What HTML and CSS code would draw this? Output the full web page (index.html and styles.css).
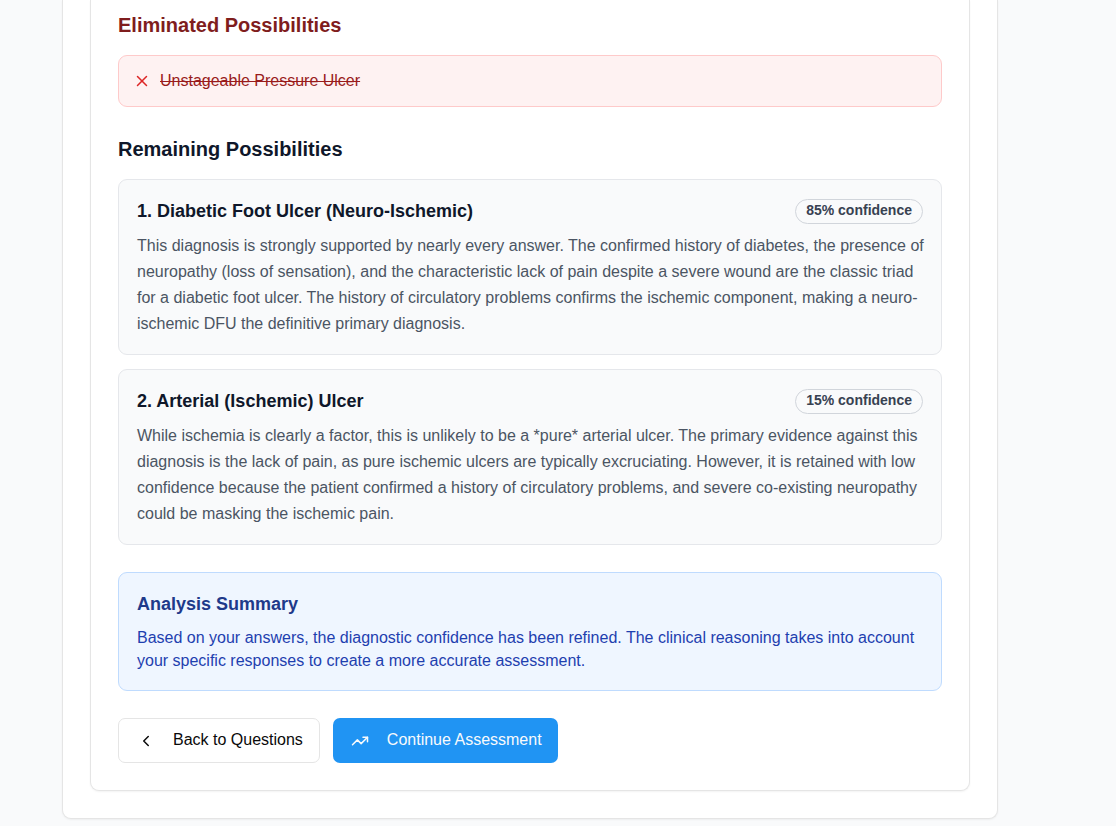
FILE: index.html
```html
<!DOCTYPE html>
<html lang="en">
<head>
<meta charset="utf-8">
<meta name="viewport" content="width=device-width, initial-scale=1">
<title>Diagnostic Assessment</title>
<link rel="stylesheet" href="styles.css">
</head>
<body>
<main class="page">
  <div class="panel">
    <div class="panel results">
      <section class="group">
        <h2 class="heading heading-danger">Eliminated Possibilities</h2>
        <div class="eliminated">
          <svg class="icon" viewBox="0 0 24 24" aria-hidden="true"><path d="M18 6 6 18"/><path d="m6 6 12 12"/></svg>
          <s>Unstageable Pressure Ulcer</s>
        </div>
      </section>

      <section class="group">
        <h2 class="heading">Remaining Possibilities</h2>
        <div class="list">
          <article class="diagnosis">
            <div class="diagnosis-head">
              <h3 class="title">1. Diabetic Foot Ulcer (Neuro-Ischemic)</h3>
              <span class="badge">85% confidence</span>
            </div>
            <p class="reasoning">This diagnosis is strongly supported by nearly every answer. The confirmed history of diabetes, the presence of neuropathy (loss of sensation), and the characteristic lack of pain despite a severe wound are the classic triad for a diabetic foot ulcer. The history of circulatory problems confirms the ischemic component, making a neuro-ischemic DFU the definitive primary diagnosis.</p>
          </article>
          <article class="diagnosis">
            <div class="diagnosis-head">
              <h3 class="title">2. Arterial (Ischemic) Ulcer</h3>
              <span class="badge">15% confidence</span>
            </div>
            <p class="reasoning">While ischemia is clearly a factor, this is unlikely to be a *pure* arterial ulcer. The primary evidence against this diagnosis is the lack of pain, as pure ischemic ulcers are typically excruciating. However, it is retained with low confidence because the patient confirmed a history of circulatory problems, and severe co-existing neuropathy could be masking the ischemic pain.</p>
          </article>
        </div>
      </section>

      <section class="summary">
        <h3 class="title">Analysis Summary</h3>
        <p class="summary-text">Based on your answers, the diagnostic confidence has been refined. The clinical reasoning takes into account your specific responses to create a more accurate assessment.</p>
      </section>

      <div class="actions">
        <button type="button" class="button">
          <svg class="icon" viewBox="0 0 24 24" aria-hidden="true"><path d="m15 18-6-6 6-6"/></svg>
          <span class="button-label">Back to Questions</span>
        </button>
        <button type="button" class="button button-primary">
          <svg class="icon" viewBox="0 0 24 24" aria-hidden="true"><path d="M22 7 13.5 15.5 8.5 10.5 2 17"/><path d="M16 7h6v6"/></svg>
          <span class="button-label">Continue Assessment</span>
        </button>
      </div>
    </div>
  </div>
</main>
</body>
</html>
```
FILE: styles.css
```css
* {
  box-sizing: border-box;
}

body {
  margin: 0;
  background: #f9fafb;
  color: #0f172a;
  font-family: "Liberation Sans", Arial, sans-serif;
  font-size: 16px;
  line-height: 23px;
}

h2,
h3,
p {
  margin: 0;
}

.page {
  padding: 0 118px 7px 62px;
}

.panel {
  padding: 0 27px 27px;
  border: 1px solid #e5e5e5;
  border-top: 0;
  border-radius: 0 0 9px 9px;
  background: #fff;
  box-shadow: 0 1px 2px rgba(0, 0, 0, 0.05);
}

.results {
  display: flex;
  flex-direction: column;
  gap: 27px;
  padding-top: 10px;
}

.group {
  display: flex;
  flex-direction: column;
  gap: 14px;
}

.heading {
  font-size: 20px;
  font-weight: 700;
  line-height: 31px;
}

.heading-danger {
  color: #7f1d1d;
}

.icon {
  flex: none;
  width: 18px;
  height: 18px;
  fill: none;
  stroke: currentColor;
  stroke-width: 2;
  stroke-linecap: round;
  stroke-linejoin: round;
}

.eliminated {
  display: flex;
  align-items: center;
  gap: 9px;
  padding: 13px 14px 14px;
  border: 1px solid #fecaca;
  border-radius: 9px;
  background: #fef2f2;
  color: #991b1b;
}

.eliminated .icon {
  color: #dc2626;
}

.list {
  display: flex;
  flex-direction: column;
  gap: 14px;
}

.diagnosis {
  display: flex;
  flex-direction: column;
  gap: 9px;
  padding: 18px 12px 17px 18px;
  border: 1px solid #e5e7eb;
  border-radius: 9px;
  background: #f9fafb;
}

.diagnosis-head {
  display: flex;
  align-items: center;
  justify-content: space-between;
  gap: 16px;
  padding-right: 6px;
}

.title {
  font-size: 18px;
  font-weight: 700;
  line-height: 26px;
}

.badge {
  flex: none;
  padding: 1px 10px 4px;
  border: 1px solid #d1d5db;
  border-radius: 13px;
  color: #374151;
  font-size: 14px;
  font-weight: 700;
  line-height: 18px;
}

.reasoning {
  color: #4b5563;
  line-height: 26px;
}

.summary {
  display: flex;
  flex-direction: column;
  gap: 9px;
  padding: 18px;
  border: 1px solid #bfdbfe;
  border-radius: 9px;
  background: #eff6ff;
  color: #1e3a8a;
}

.summary-text {
  color: #1e40af;
}

.actions {
  display: flex;
  flex-wrap: wrap;
  gap: 13px;
}

.button {
  display: flex;
  align-items: center;
  gap: 18px;
  padding: 10px 16px 10px 18px;
  border: 1px solid #e5e5e5;
  border-radius: 7px;
  background: #fff;
  color: #0a0a0a;
  font: inherit;
  cursor: pointer;
}

.button-label {
  padding-bottom: 2px;
  line-height: 21px;
}

.button-primary {
  padding: 11px 16px 11px 18px;
  border: 0;
  background: #2094f3;
  color: #f8fafc;
}
```
